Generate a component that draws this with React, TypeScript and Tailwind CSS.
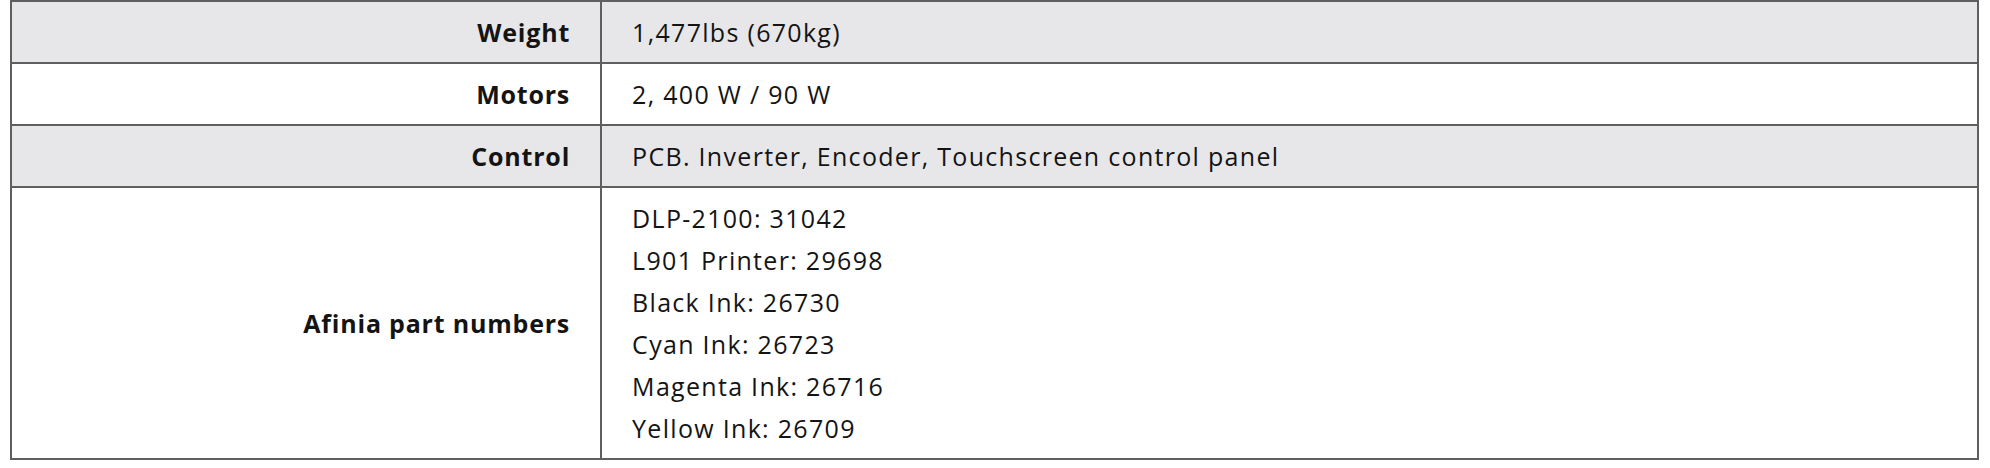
const rows: { label: string; value: string[]; shaded: boolean }[] = [
  { label: "Weight", value: ["1,477lbs (670kg)"], shaded: true },
  { label: "Motors", value: ["2, 400 W / 90 W"], shaded: false },
  { label: "Control", value: ["PCB. Inverter, Encoder, Touchscreen control panel"], shaded: true },
  {
    label: "Afinia part numbers",
    value: [
      "DLP-2100: 31042",
      "L901 Printer: 29698",
      "Black Ink: 26730",
      "Cyan Ink: 26723",
      "Magenta Ink: 26716",
      "Yellow Ink: 26709",
    ],
    shaded: false,
  },
];

export default function App() {
  return (
    <div className="bg-white w-[1990px] h-[468px] pl-[10px] font-['Open_Sans','Liberation_Sans',sans-serif] text-[#141414]">
      <table className="w-[1969px] border-collapse text-[25px] leading-[42px] tracking-[1.3px]">
        <tbody>
          {rows.map((row) => (
            <tr key={row.label} className={row.shaded ? "bg-[#e7e7e9]" : "bg-white"}>
              <th className="w-[30%] border-2 border-[#5f5f5f] px-[30px] py-[9px] text-right font-bold tracking-[0.8px]">
                {row.label}
              </th>
              <td className="border-2 border-[#5f5f5f] px-[30px] py-[9px] text-left">
                {row.value.map((line) => (
                  <div key={line}>{line}</div>
                ))}
              </td>
            </tr>
          ))}
        </tbody>
      </table>
    </div>
  );
}
